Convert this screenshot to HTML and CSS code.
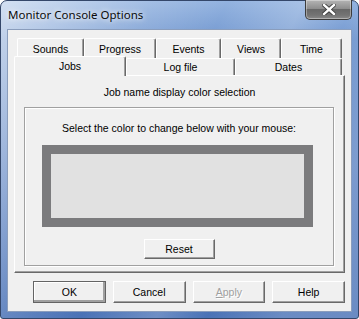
FILE: index.html
```html
<!DOCTYPE html>
<html lang="en">
  <head>
    <meta charset="UTF-8" />
    <title>Monitor Console Options</title>
    <link rel="stylesheet" href="styles.css">
  </head>
  <body>
    <div class="vindue">
      <div class="titellinje">
        <span class="titel">Monitor Console Options</span>
        <div class="luk">
          <svg width="14" height="11" viewBox="0 0 14 11">
            <path d="M2 1 L12 10 M12 1 L2 10" stroke="#3a3a3a" stroke-width="4.2" stroke-linecap="square"/>
            <path d="M2 1 L12 10 M12 1 L2 10" stroke="#fff" stroke-width="2.4" stroke-linecap="square"/>
          </svg>
        </div>
      </div>
      <div class="klient">
        <nav class="faner">
          <div class="fanerække bag">
            <div class="fane" style="width:67px">Sounds</div>
            <div class="fane" style="width:72px">Progress</div>
            <div class="fane" style="width:65px">Events</div>
            <div class="fane" style="width:60px">Views</div>
            <div class="fane" style="width:61px">Time</div>
          </div>
          <div class="fanerække for">
            <div class="fane valgt" style="width:112px">Jobs</div>
            <div class="fane" style="width:109px">Log file</div>
            <div class="fane" style="width:107px">Dates</div>
          </div>
        </nav>
        <section class="panel">
          <p class="overskrift">Job name display color selection</p>
          <div class="gruppe">
            <p class="vejledning">Select the color to change below with your mouse:</p>
            <div class="farvefelt"><div class="farve"></div></div>
            <button class="knap nulstil">Reset</button>
          </div>
        </section>
        <div class="knapper">
          <button class="knap standard">OK</button>
          <button class="knap">Cancel</button>
          <button class="knap slukket"><u>A</u>pply</button>
          <button class="knap">Help</button>
        </div>
      </div>
    </div>
  </body>
</html>
```

FILE: styles.css
```css
* {
  box-sizing: border-box;
}
body {
  margin: 0;
  font-family: "Liberation Sans", Arial, sans-serif;
  font-size: 10.5px;
  color: #000;
  background: #fff;
}
p {
  margin: 0;
}
.vindue {
  width: 359px;
  height: 319px;
  border: 1px solid #34476a;
  border-radius: 7px 7px 3px 3px;
  display: flex;
  flex-direction: column;
  background:
    linear-gradient(115deg, rgba(255,255,255,0.6) 0%, rgba(255,255,255,0.15) 30%, rgba(255,255,255,0) 45%, rgba(255,255,255,0.2) 60%, rgba(255,255,255,0) 70%, rgba(255,255,255,0.18) 85%),
    linear-gradient(to bottom, #93b3e0 0%, #7499d0 12%, #5c82c2 60%, #4a72b6 100%);
}
.titellinje {
  height: 28px;
  display: flex;
  align-items: flex-start;
}
.titel {
  padding: 6px 0 0 7px;
  line-height: 16px;
  font-family: "Noto Sans", "Open Sans", sans-serif;
  font-size: 11.5px;
  color: #0b0b0b;
  text-shadow: 0 0 5px rgba(255,255,255,0.9), 0 0 9px rgba(255,255,255,0.7);
}
.luk {
  margin: -1px 6px 0 auto;
  width: 47px;
  height: 20px;
  border: 1px solid #3c3c3c;
  border-top: none;
  border-radius: 0 0 5px 5px;
  background: linear-gradient(to bottom, #b5b5b5 0%, #8e8e8e 45%, #686868 50%, #747474 80%, #8a8a8a 100%);
  box-shadow: inset 0 0 0 1px rgba(255,255,255,0.35);
  display: flex;
  align-items: center;
  justify-content: center;
}
.klient {
  flex: 1;
  margin: 0 6px 6px;
  border: 1px solid #8a9dbc;
  background: #f0f0f0;
  padding: 8px 6px 8px;
  display: flex;
  flex-direction: column;
}
.fanerække {
  display: flex;
  height: 20px;
}
.bag {
  margin-left: 3px;
}
.for {
  margin-top: -2px;
  height: 19px;
  position: relative;
  z-index: 1;
}
.fane {
  height: 20px;
  display: flex;
  align-items: center;
  justify-content: center;
  background: #f0f0f0;
  border-top: 1px solid #fff;
  border-left: 1px solid #fff;
  border-right: 1px solid #696969;
  border-radius: 2px 2px 0 0;
  box-shadow: inset -1px 0 0 #a0a0a0;
}
.for .fane {
  height: 17px;
  margin-top: 2px;
}
.for .fane.valgt {
  height: 20px;
  margin-top: 0;
  padding-bottom: 2px;
}
.panel {
  height: 198px;
  border: 1px solid;
  border-color: #fff #696969 #696969 #fff;
  box-shadow: inset -1px -1px 0 #a0a0a0;
  padding-top: 9px;
}
.overskrift {
  text-align: center;
  line-height: 14px;
}
.gruppe {
  margin: 8px 10px 0 9px;
  height: 159px;
  border: 1px solid #a0a0a0;
  box-shadow: inset 1px 1px 0 #fff, 1px 1px 0 #fff;
  padding-top: 13px;
  display: flex;
  flex-direction: column;
  align-items: center;
}
.vejledning {
  line-height: 14px;
}
.farvefelt {
  margin-top: 10px;
  align-self: flex-start;
  margin-left: 17px;
  width: 271px;
  height: 82px;
  border: 9px solid #7b7b7d;
}
.farve {
  height: 100%;
  background: #e1e1e1;
}
.knap {
  font: inherit;
  color: #000;
  background: #f0f0f0;
  border: 1px solid;
  border-color: #fff #696969 #696969 #fff;
  box-shadow: inset -1px -1px 0 #a0a0a0;
  padding: 0;
}
.nulstil {
  margin-top: 12px;
  width: 71px;
  height: 20px;
}
.knapper {
  margin-top: 8px;
  padding-left: 19px;
  display: flex;
  gap: 7px;
}
.knapper .knap {
  width: 74px;
  height: 22px;
}
.standard {
  outline: 1px solid #646464;
  outline-offset: -1px;
  box-shadow: inset -2px -2px 0 #a0a0a0, inset 1px 1px 0 #fff;
}
.slukket {
  color: #a0a0a0;
  text-shadow: 1px 1px 0 #fff;
}
```
